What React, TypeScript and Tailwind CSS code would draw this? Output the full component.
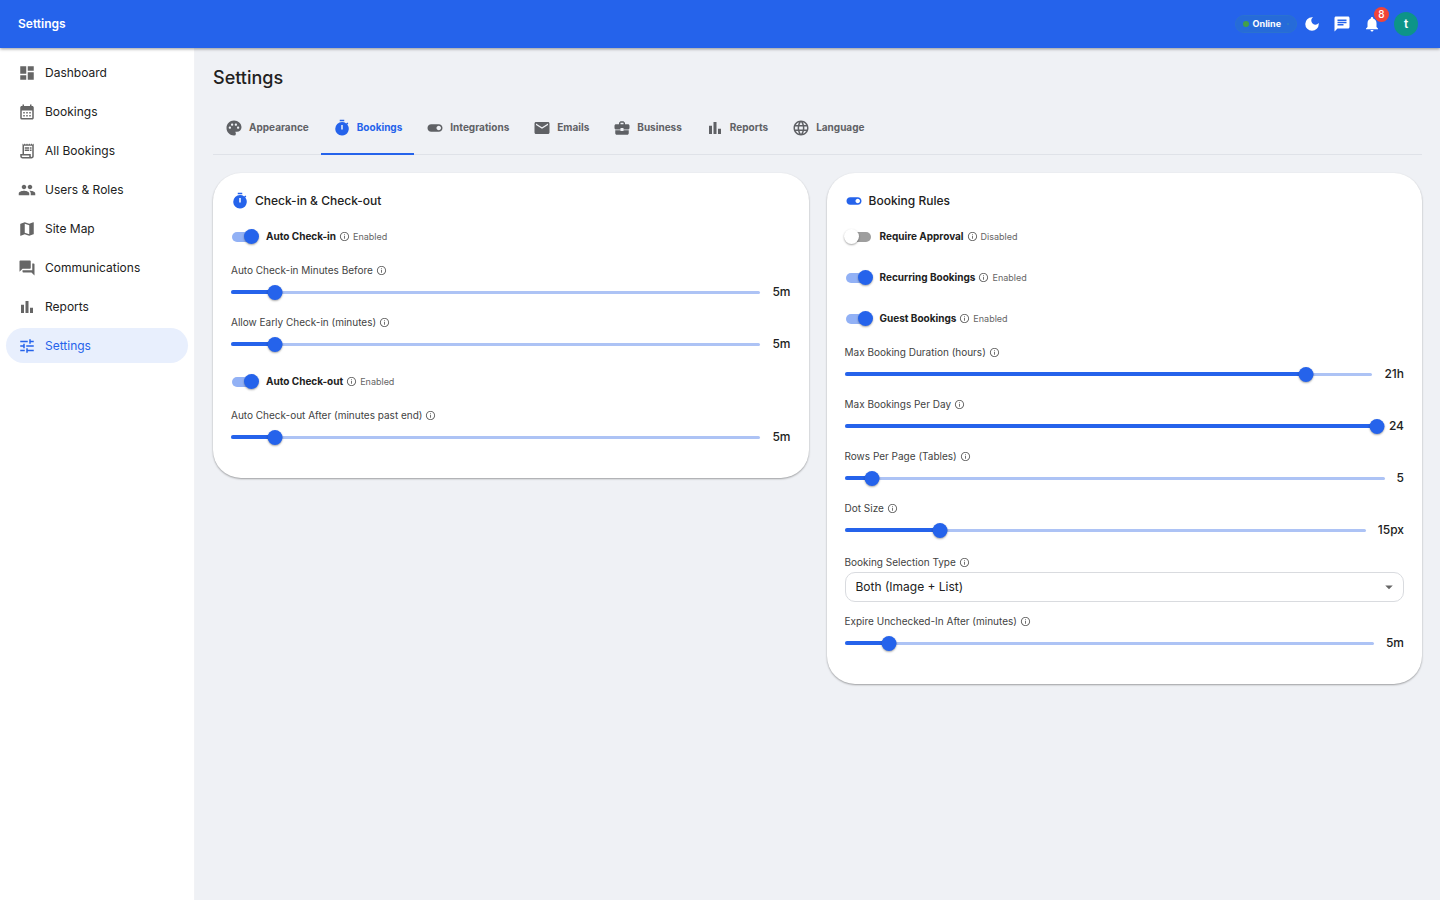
import { ReactNode, useId, useState } from "react";
import { IconType } from "react-icons";
import {
  MdArrowDropDown,
  MdBarChart,
  MdBusinessCenter,
  MdCalendarMonth,
  MdChat,
  MdDarkMode,
  MdDashboard,
  MdEmail,
  MdForum,
  MdInfoOutline,
  MdLanguage,
  MdMap,
  MdNotifications,
  MdOutlineReceiptLong,
  MdPalette,
  MdPeople,
  MdTimer,
  MdToggleOn,
  MdTune,
} from "react-icons/md";

interface LinkItem {
  label: string;
  icon: IconType;
}

const navItems: LinkItem[] = [
  { label: "Dashboard", icon: MdDashboard },
  { label: "Bookings", icon: MdCalendarMonth },
  { label: "All Bookings", icon: MdOutlineReceiptLong },
  { label: "Users & Roles", icon: MdPeople },
  { label: "Site Map", icon: MdMap },
  { label: "Communications", icon: MdForum },
  { label: "Reports", icon: MdBarChart },
  { label: "Settings", icon: MdTune },
];

const tabs: LinkItem[] = [
  { label: "Appearance", icon: MdPalette },
  { label: "Bookings", icon: MdTimer },
  { label: "Integrations", icon: MdToggleOn },
  { label: "Emails", icon: MdEmail },
  { label: "Business", icon: MdBusinessCenter },
  { label: "Reports", icon: MdBarChart },
  { label: "Language", icon: MdLanguage },
];

function Header() {
  return (
    <header className="relative z-10 flex h-12 items-center justify-between bg-[#2563eb] pr-[22px] pl-[18px] text-white shadow-[0_1px_3px_rgba(0,0,0,0.4)]">
      <div className="text-xs font-semibold">Settings</div>
      <div className="flex items-center gap-3">
        <div className="-mr-1.5 flex h-[18px] items-center gap-1 rounded-full border border-[#2a72d0] bg-[#266bd9] px-[7px] text-[9px] font-bold">
          <span className="size-1.5 rounded-full bg-[#43a047]"></span>
          Online
          <span className="ml-0.5 size-0.5 rounded-full bg-[#2f7fc0]"></span>
        </div>
        <button aria-label="Toggle theme">
          <MdDarkMode size={18} />
        </button>
        <button aria-label="Messages">
          <MdChat size={18} />
        </button>
        <button aria-label="Notifications" className="relative">
          <MdNotifications size={18} />
          <span className="absolute -top-2 -right-2 flex size-[15px] items-center justify-center rounded-full bg-[#f04438] text-[10px] font-medium">
            8
          </span>
        </button>
        <button className="ml-px size-6 rounded-full bg-[#0d9488] text-xs font-semibold">
          t
        </button>
      </div>
    </header>
  );
}

function Sidebar({ active = "" }) {
  return (
    <nav className="flex w-[195px] shrink-0 flex-col gap-1 border-r border-[#f1f2f5] bg-white px-1.5 pt-[7px]">
      {navItems.map(({ label, icon: Icon }) => (
        <a
          key={label}
          href="#"
          className={`flex h-[35px] items-center gap-[9px] rounded-full px-3 text-xs ${
            active === label ? "bg-[#e8effd] text-[#2563eb]" : "text-[#212121]"
          }`}
        >
          <Icon
            size={18}
            className={active === label ? "text-[#2563eb]" : "text-[#666666]"}
          />
          {label}
        </a>
      ))}
    </nav>
  );
}

function Tabs({ value = "", onChange = (x: string) => {} }) {
  return (
    <div role="tablist" className="flex border-b border-[#dfe2e8]">
      {tabs.map(({ label, icon: Icon }) => (
        <button
          key={label}
          role="tab"
          aria-selected={value === label}
          onClick={() => onChange(label)}
          className={`-mb-px flex h-[53px] items-center gap-1.5 border-b-2 px-3 text-[10px] font-bold ${
            value === label
              ? "border-[#2563eb] text-[#2563eb]"
              : "border-transparent text-[#5f6165]"
          }`}
        >
          <Icon size={18} />
          {label}
        </button>
      ))}
    </div>
  );
}

function Card({
  title,
  icon: Icon,
  children,
}: {
  title: string;
  icon: IconType;
  children: ReactNode;
}) {
  return (
    <section className="min-w-0 flex-1 rounded-[28px] bg-white px-[18px] pt-[18px] pb-6 shadow-[0_1px_2px_rgba(0,0,0,0.35)]">
      <h2 className="mb-[5px] flex h-5 items-center gap-1.5 text-xs font-medium text-[#212121]">
        <Icon size={18} className="text-[#2563eb]" />
        {title}
      </h2>
      {children}
    </section>
  );
}

function SwitchField({ label = "", initial = false }) {
  const [checked, setChecked] = useState(initial);
  return (
    <div className="flex h-[41px] items-center">
      <label className="relative flex cursor-pointer items-center gap-[9px] text-[10px] font-bold text-[#212121]">
        <input
          type="checkbox"
          role="switch"
          className="sr-only"
          checked={checked}
          onChange={() => setChecked(!checked)}
        />
        <span
          className={`ml-px flex h-2.5 w-[25px] items-center rounded-full ${
            checked ? "justify-end bg-[#92b1f5]" : "bg-[#9e9e9e]"
          }`}
        >
          <span
            className={`size-[15px] shrink-0 rounded-full shadow-[0_1px_2px_rgba(0,0,0,0.35)] ${
              checked ? "-mr-0.5 bg-[#2563eb]" : "-ml-0.5 bg-white"
            }`}
          ></span>
        </span>
        {label}
      </label>
      <MdInfoOutline size={11} className="ml-[3px] text-[#666666]" />
      <span className="ml-[3px] text-[9px] text-[#666666]">
        {checked ? "Enabled" : "Disabled"}
      </span>
    </div>
  );
}

function FieldLabel({ id = "", text = "" }) {
  return (
    <div className="flex h-4 items-center gap-[3px] text-[#424242]">
      <label htmlFor={id} className="text-[10px]">
        {text}
      </label>
      <MdInfoOutline size={11} className="text-[#666666]" />
    </div>
  );
}

function SliderField({ label = "", initial = 0, min = 0, max = 60, unit = "" }) {
  const id = useId();
  const [value, setValue] = useState(initial);
  const percent = `${((value - min) / (max - min)) * 100}%`;
  return (
    <div className="h-[52px] pt-[5px]">
      <FieldLabel id={id} text={label} />
      <div className="flex h-7 items-center gap-3">
        <div className="relative flex h-4 flex-1 items-center">
          <span className="h-[3px] w-full rounded-full bg-[#adc3f5]"></span>
          <span
            className="absolute left-0 h-1 rounded-full bg-[#2563eb]"
            style={{ width: percent }}
          ></span>
          <span
            className="absolute size-[15px] -translate-x-1/2 rounded-full bg-[#2563eb] shadow-[0_1px_2px_rgba(0,0,0,0.35)]"
            style={{ left: percent }}
          ></span>
          <input
            id={id}
            type="range"
            min={min}
            max={max}
            value={value}
            onChange={(event) => setValue(Number(event.target.value))}
            className="absolute inset-0 w-full cursor-pointer opacity-0"
          />
        </div>
        <span className="text-xs font-medium text-[#212121]">
          {value}
          {unit}
        </span>
      </div>
    </div>
  );
}

function SelectField({ label = "", options = [] as string[] }) {
  const id = useId();
  return (
    <div className="pt-[7px] pb-1.5">
      <FieldLabel id={id} text={label} />
      <div className="relative mt-0.5">
        <select
          id={id}
          className="block h-[30px] w-full appearance-none rounded-[10px] border border-[#d9dbdf] bg-white px-2.5 text-xs text-[#212121]"
        >
          {options.map((option) => (
            <option key={option}>{option}</option>
          ))}
        </select>
        <MdArrowDropDown
          size={18}
          className="pointer-events-none absolute top-1.5 right-1.5 text-[#666666]"
        />
      </div>
    </div>
  );
}

export default function App() {
  const [tab, setTab] = useState("Bookings");
  return (
    <div className="flex min-h-screen flex-col bg-[#eff1f5] font-['Inter',sans-serif]">
      <Header />
      <div className="flex flex-1">
        <Sidebar active="Settings" />
        <main className="min-w-0 flex-1 px-[18px] pt-[18px] pb-6">
          <h1 className="mb-3 text-lg leading-6 font-medium text-[#212121]">
            Settings
          </h1>
          <Tabs value={tab} onChange={setTab} />
          <div className="mt-[18px] flex items-start gap-[18px]">
            <Card title="Check-in & Check-out" icon={MdTimer}>
              <SwitchField label="Auto Check-in" initial />
              <SliderField
                label="Auto Check-in Minutes Before"
                initial={5}
                unit="m"
              />
              <SliderField
                label="Allow Early Check-in (minutes)"
                initial={5}
                unit="m"
              />
              <SwitchField label="Auto Check-out" initial />
              <SliderField
                label="Auto Check-out After (minutes past end)"
                initial={5}
                unit="m"
              />
            </Card>
            <Card title="Booking Rules" icon={MdToggleOn}>
              <SwitchField label="Require Approval" />
              <SwitchField label="Recurring Bookings" initial />
              <SwitchField label="Guest Bookings" initial />
              <SliderField
                label="Max Booking Duration (hours)"
                initial={21}
                max={24}
                unit="h"
              />
              <SliderField label="Max Bookings Per Day" initial={24} max={24} />
              <SliderField label="Rows Per Page (Tables)" initial={5} max={100} />
              <SliderField
                label="Dot Size"
                initial={15}
                min={4}
                max={64}
                unit="px"
              />
              <SelectField
                label="Booking Selection Type"
                options={["Both (Image + List)", "Image", "List"]}
              />
              <SliderField
                label="Expire Unchecked-In After (minutes)"
                initial={5}
                unit="m"
              />
            </Card>
          </div>
        </main>
      </div>
    </div>
  );
}
